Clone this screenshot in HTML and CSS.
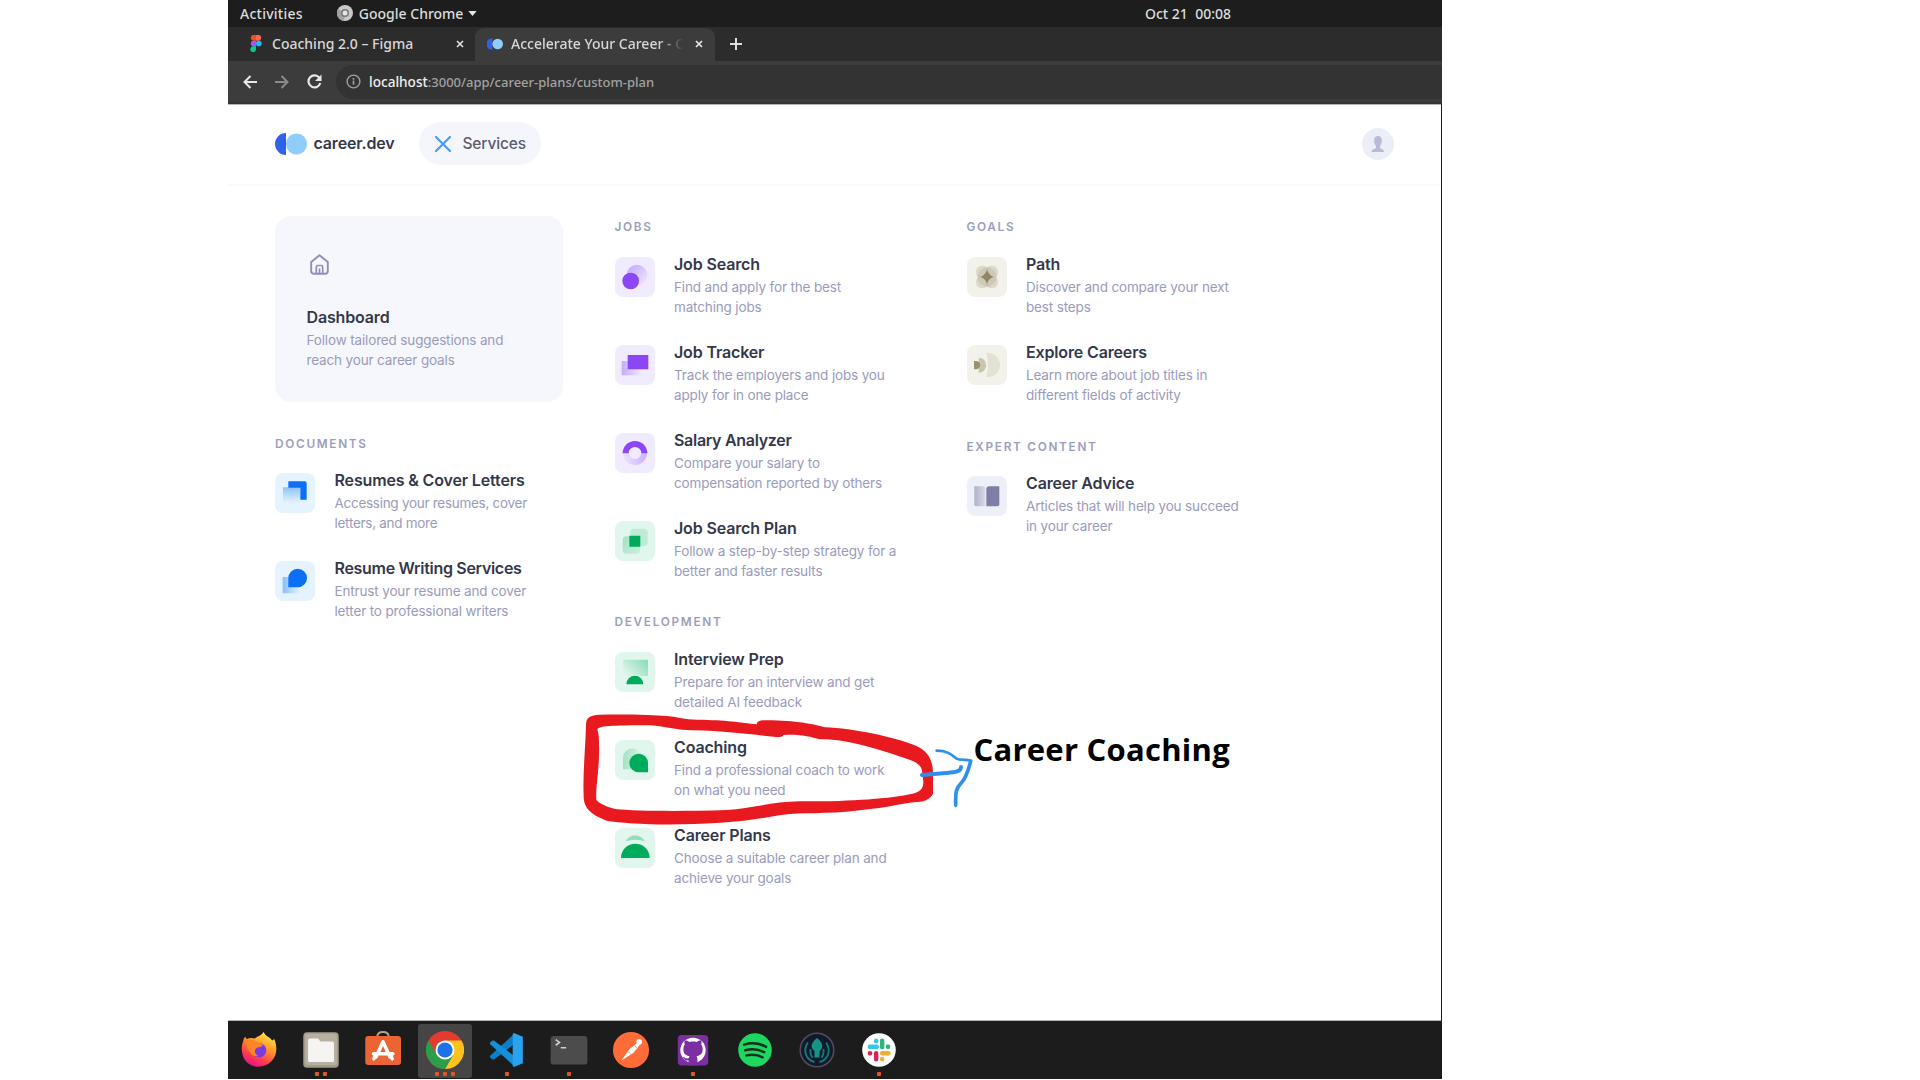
FILE: index.html
```html
<!DOCTYPE html>
<html lang="en">
<head>
<meta charset="utf-8">
<title>career.dev – Services</title>
<link rel="stylesheet" href="styles.css">
</head>
<body>
<div class="desktop">
  <div class="system-bar">
    <span class="activities">Activities</span>
    <svg class="system-icon" viewBox="0 0 16 16"><circle cx="8" cy="8" r="8" fill="#c9c9c9"/><path d="M8 8L1 4a8 8 0 0 0 6 12z" fill="#a2a2a2"/><circle cx="8" cy="8" r="4" fill="#777"/><circle cx="8" cy="8" r="2.500" fill="#e4e4e4"/></svg>
    <span class="app-name">Google Chrome</span>
    <svg class="caret" viewBox="0 0 10 6"><path d="M0 0h10L5 6z" fill="#e6e6e6"/></svg>
    <span class="clock">Oct 21&nbsp; 00:08</span>
  </div>
  <div class="tab-strip">
    <div class="tab">
      <svg class="figma" viewBox="0 0 12 18"><path d="M6 0H3.500a3 3 0 0 0 0 6H6z" fill="#f24e1e"/><path d="M6 0h2.500a3 3 0 0 1 0 6H6z" fill="#ff6250"/><path d="M6 6H3.500a3 3 0 0 0 0 6H6z" fill="#b14dff"/><circle cx="9" cy="9" r="3" fill="#1abcfe"/><path d="M6 12H3.500A3 3 0 1 0 6 15z" fill="#0acf83"/></svg>
      <span class="tab-title tab-title-figma">Coaching 2.0 – Figma</span>
      <svg class="close" viewBox="0 0 8 8"><path d="M1 1l6 6M7 1L1 7" stroke="#dedede" stroke-width="1.700"/></svg>
    </div>
    <div class="tab tab-active">
      <svg class="tab-logo" viewBox="0 0 30 22"><path d="M10 0a11 11 0 0 0 0 22z" fill="#2e62e8"/><circle cx="20" cy="11" r="10" fill="#90cdfb"/></svg>
      <span class="tab-title tab-title-career">Accelerate Your Career - C</span>
      <svg class="close" viewBox="0 0 8 8"><path d="M1 1l6 6M7 1L1 7" stroke="#e6e6e6" stroke-width="1.700"/></svg>
    </div>
    <svg class="new-tab" viewBox="0 0 12 12"><path d="M6 0v12M0 6h12" stroke="#dedede" stroke-width="2"/></svg>
  </div>
  <div class="toolbar">
    <svg class="nav" viewBox="0 0 14 14"><path d="M14 7H1.500M7.500 1l-6 6 6 6" fill="none" stroke="#e8e8e8" stroke-width="2"/></svg>
    <svg class="nav" viewBox="0 0 14 14"><path d="M0 7h12.500M6.500 1l6 6-6 6" fill="none" stroke="#8b8b8b" stroke-width="2"/></svg>
    <svg class="nav reload" viewBox="0 0 15 15"><path d="M12.500 4A6 6 0 1 0 13.300 9" fill="none" stroke="#e8e8e8" stroke-width="2.200"/><path d="M14.500 .5v6.500H8z" fill="#e8e8e8"/></svg>
    <div class="address">
      <svg class="info" viewBox="0 0 16 16"><circle cx="8" cy="8" r="6.800" fill="none" stroke="#a0a0a0" stroke-width="1.500"/><path d="M8 7v4.500M8 4.300v1.700" stroke="#a0a0a0" stroke-width="1.700"/></svg>
      <span class="url"><span class="host">localhost</span><span class="path">:3000/app/career-plans/custom-plan</span></span>
    </div>
  </div>

  <div class="page">
    <header class="header">
      <svg class="logo" viewBox="0 0 32 22"><path d="M11 0a11 11 0 0 0 0 22z" fill="#2e62e8"/><circle cx="21.500" cy="11" r="10.500" fill="#90cdfb"/></svg>
      <span class="brand">career.dev</span>
      <div class="services">
        <svg class="services-x" viewBox="0 0 16 16"><path d="M1 1l14 14M15 1L1 15" stroke="#4a9af8" stroke-width="2.200" stroke-linecap="round"/></svg>
        <span class="services-label">Services</span>
      </div>
      <svg class="avatar" viewBox="0 0 32 32"><circle cx="16" cy="16" r="16" fill="#eceef7"/><path d="M16 8c5 0 4.600 7 2 10v2c1 1 4 1 4 4H9.500c0-3 3.500-3 4.500-4v-2c-2.600-3-3-10 2-10z" fill="#b9bbd6"/></svg>
    </header>
    <main class="menu">
      <div class="column">
        <div class="dashboard">
          <svg class="home" viewBox="0 0 19 21"><path d="M1.200 8L9.500 1.200 17.800 8v9q0 2.800-2.800 2.800H4q-2.800 0-2.800-2.800z" fill="none" stroke="#8f8fb3" stroke-width="1.900" stroke-linejoin="round"/><path d="M6.300 19.500V13q0-1.500 1.500-1.500h3.400q1.500 0 1.500 1.500v6.500M9.500 14.500v5" fill="none" stroke="#8f8fb3" stroke-width="1.700"/></svg>
          <h3 class="title">Dashboard</h3>
          <p class="desc">Follow tailored suggestions and<br>reach your career goals</p>
        </div>
        <h2 class="label">DOCUMENTS</h2>
        <div class="item">
          <svg class="icon icon-blue" viewBox="0 0 120 120"><defs><linearGradient id="g1" x2="0" y2="1"><stop stop-color="#8cc4fd"/><stop offset="1" stop-color="#e5f3ff"/></linearGradient></defs><path d="M24 43h51v46H24z" fill="url(#g1)"/><path d="M40 25h50q5 0 5 5v50H76V44H40z" fill="#0d6ff5"/></svg>
          <div class="text"><h3 class="title">Resumes &amp; Cover Letters</h3><p class="desc desc-tight">Accessing your resumes, cover<br>letters, and more</p></div>
        </div>
        <div class="item">
          <svg class="icon icon-blue" viewBox="0 0 120 120"><defs><linearGradient id="g2"><stop stop-color="#86c0fc"/><stop offset="1" stop-color="#e5f3ff"/></linearGradient></defs><path d="M23 48h52v49H23z" fill="url(#g2)"/><path d="M40 79V51a28 28 0 1 1 28 28z" fill="#0d6ff5"/></svg>
          <div class="text"><h3 class="title title-tight">Resume Writing Services</h3><p class="desc">Entrust your resume and cover<br>letter to professional writers</p></div>
        </div>
      </div>

      <div class="column">
        <h2 class="label label-top">JOBS</h2>
        <div class="item">
          <svg class="icon icon-violet" viewBox="0 0 120 120"><defs><linearGradient id="g3" x2="1" y2="1"><stop stop-color="#bfa3fb"/><stop offset="1" stop-color="#f1ebff"/></linearGradient></defs><circle cx="66" cy="54" r="31" fill="url(#g3)"/><circle cx="47" cy="72" r="25" fill="#8b46f5"/></svg>
          <div class="text"><h3 class="title">Job Search</h3><p class="desc">Find and apply for the best<br>matching jobs</p></div>
        </div>
        <div class="item">
          <svg class="icon icon-violet" viewBox="0 0 120 120"><defs><linearGradient id="g4"><stop stop-color="#c3abfb"/><stop offset="1" stop-color="#f1ebff"/></linearGradient></defs><path d="M20 48h62v43H20z" fill="url(#g4)"/><path d="M38 30h62v43H38z" fill="#8b46f5"/></svg>
          <div class="text"><h3 class="title">Job Tracker</h3><p class="desc">Track the employers and jobs you<br>apply for in one place</p></div>
        </div>
        <div class="item">
          <svg class="icon icon-violet" viewBox="0 0 120 120"><defs><linearGradient id="g5"><stop stop-color="#e8deff"/><stop offset="1" stop-color="#cdb8fc"/></linearGradient></defs><path d="M33 60a27 27 0 0 0 54 0" fill="none" stroke="url(#g5)" stroke-width="18"/><path d="M32 61a28 28 0 0 1 56 0" fill="none" stroke="#8b46f5" stroke-width="18"/></svg>
          <div class="text"><h3 class="title title-tight">Salary Analyzer</h3><p class="desc">Compare your salary to<br>compensation reported by others</p></div>
        </div>
        <div class="item">
          <svg class="icon icon-green" viewBox="0 0 120 120"><defs><linearGradient id="g6" x2="1" y2="1"><stop stop-color="#a2e2c4"/><stop offset="1" stop-color="#caeedd"/></linearGradient></defs><rect x="46" y="23" width="52" height="52" rx="12" fill="#bfebd6"/><rect x="23" y="46" width="52" height="52" rx="12" fill="url(#g6)"/><path d="M43 44h33v33H43z" fill="#00ac5b"/></svg>
          <div class="text"><h3 class="title">Job Search Plan</h3><p class="desc">Follow a step-by-step strategy for a<br>better and faster results</p></div>
        </div>
        <h2 class="label label-top">DEVELOPMENT</h2>
        <div class="item">
          <svg class="icon icon-green" viewBox="0 0 120 120"><defs><linearGradient id="g7" x1="1" x2="0" y2=".6"><stop stop-color="#86dab3"/><stop offset="1" stop-color="#dcf5e9"/></linearGradient></defs><path d="M24 23h75v49H24z" fill="url(#g7)"/><path d="M31 97c0-39 57-39 57 0z" fill="#e1f6ec"/><path d="M34 97a25.500 25.500 0 0 1 51 0z" fill="#00ac5b"/></svg>
          <div class="text"><h3 class="title">Interview Prep</h3><p class="desc">Prepare for an interview and get<br>detailed AI feedback</p></div>
        </div>
        <div class="item">
          <svg class="icon icon-green" viewBox="0 0 120 120"><defs><linearGradient id="g8" x2="1"><stop stop-color="#a4e2c5"/><stop offset="1" stop-color="#d8f3e6"/></linearGradient></defs><path d="M24 88V53a28 28 0 0 1 56 0v35z" fill="url(#g8)"/><path d="M99 97H71a28 28 0 1 1 28-28z" fill="#00ac5b"/></svg>
          <div class="text"><h3 class="title">Coaching</h3><p class="desc">Find a professional coach to work<br>on what you need</p></div>
        </div>
        <div class="item">
          <svg class="icon icon-green" viewBox="0 0 120 120"><path d="M32 40a32 32 0 0 1 57 0q-28-9-57 0z" fill="#93dfbb"/><path d="M18 90a43 43 0 0 1 86 0z" fill="#00ac5b"/></svg>
          <div class="text"><h3 class="title">Career Plans</h3><p class="desc">Choose a suitable career plan and<br>achieve your goals</p></div>
        </div>
      </div>

      <div class="column">
        <h2 class="label label-top">GOALS</h2>
        <div class="item">
          <svg class="icon icon-sand" viewBox="0 0 120 120"><g fill="#b9b59a" fill-opacity=".4"><rect x="27" y="26" width="38" height="38" rx="18"/><rect x="55" y="26" width="38" height="38" rx="18"/><rect x="27" y="56" width="38" height="38" rx="18"/><rect x="55" y="56" width="38" height="38" rx="18"/><circle cx="60" cy="60" r="29"/></g><path d="M60 39q5 14 19 21-14 5-19 20-5-15-19-20 14-7 19-21z" fill="#8f8762"/></svg>
          <div class="text"><h3 class="title">Path</h3><p class="desc">Discover and compare your next<br>best steps</p></div>
        </div>
        <div class="item">
          <svg class="icon icon-sand" viewBox="0 0 120 120"><path d="M58 24h5a36 36 0 0 1 0 72h-5q10-36 0-72z" fill="#e2e1d3"/><path d="M35 38a22 22 0 0 1 0 45z" fill="#c9c6ae"/><path d="M21 48h6a12 12 0 0 1 0 25h-6z" fill="#99926f"/></svg>
          <div class="text"><h3 class="title">Explore Careers</h3><p class="desc">Learn more about job titles in<br>different fields of activity</p></div>
        </div>
        <h2 class="label">EXPERT CONTENT</h2>
        <div class="item">
          <svg class="icon icon-slate" viewBox="0 0 120 120"><defs><linearGradient id="g9"><stop stop-color="#aeb0c8"/><stop offset="1" stop-color="#d9dbe9"/></linearGradient></defs><path d="M22 31h27q6 0 6 6v54H28q-6 0-6-6z" fill="url(#g9)"/><path d="M58 40q0-9 9-9h30v54q0 6-6 6H58z" fill="#7e7fa6"/></svg>
          <div class="text"><h3 class="title">Career Advice</h3><p class="desc">Articles that will help you succeed<br>in your career</p></div>
        </div>
      </div>
    </main>
  </div>

  <div class="dock">
    <div class="app">
      <svg class="app-icon" viewBox="0 0 120 120"><defs><linearGradient id="fx" x1=".8" x2=".3" y2="1"><stop stop-color="#fff24a"/><stop offset=".4" stop-color="#ff9a2a"/><stop offset=".75" stop-color="#ff3b50"/><stop offset="1" stop-color="#e3128c"/></linearGradient></defs><path d="M75 2c3 13 20 17 27 28 5-2 5-4 5-7 13 28 9 54-7 72-20 22-60 24-80 2C4 80 2 50 10 32c1-7 4-11 6-14l6 8c9-5 17-4 25-2C53 16 67 16 75 2z" fill="url(#fx)"/><circle cx="60" cy="61" r="23" fill="#7a3bdc"/><path d="M20 32c16-10 24-2 34 2 12 5 19 8 17 13-8 5-17 2-22 10-5 9 1 20 10 23-26 2-37-22-39-48z" fill="#ff8428"/></svg>
    </div>
    <div class="app">
      <svg class="app-icon" viewBox="0 0 120 120"><rect x="4" y="4" width="112" height="112" rx="12" fill="#a39c8b"/><rect x="10" y="9" width="100" height="98" rx="8" fill="#b7b0a0"/><path d="M19 30q0-6 6-6h26l7 9h37q6 0 6 6v54q0 5-5 5H24q-5 0-5-5z" fill="#f5f4f2"/></svg>
      <div class="dots"><i></i><i></i></div>
    </div>
    <div class="app">
      <svg class="app-icon" viewBox="0 0 120 120"><path d="M42 18q0-15 18-15t18 15" fill="none" stroke="#b5a28e" stroke-width="6"/><rect x="4" y="16" width="113" height="91" rx="10" fill="#ec6433"/><path d="M38 82l22-48 22 48M30 72h61M31 88l4-9M89 88l-4-9" stroke="#fff" stroke-width="11" fill="none" stroke-linecap="round" stroke-linejoin="round"/></svg>
    </div>
    <div class="app app-current">
      <svg class="app-icon" viewBox="0 0 120 120"><circle cx="60" cy="60" r="60" fill="#e33b2e"/><path d="M60 30h52a60 60 0 0 1-52 90L86 75z" fill="#fcc31e"/><path d="M8 30a60 60 0 0 0 52 90l26-45-26 8-26-8z" fill="#2a9e48"/><circle cx="60" cy="60" r="30" fill="#fff"/><circle cx="60" cy="60" r="24" fill="#1a73e8"/></svg>
      <div class="dots"><i></i><i></i><i></i></div>
    </div>
    <div class="app">
      <svg class="app-icon" viewBox="0 0 120 120"><path d="M84 8L7 78q-2 3 0 6l6 5q4 2 7 0l64-49z" fill="#0a7fcc"/><path d="M84 112L7 42q-2-3 0-6l6-5q4-2 7 0l64 49z" fill="#148fd8"/><path d="M82 6l28 12v84l-28 12q-4-1-4-6V12q0-5 4-6z" fill="#2aa3ee"/></svg>
      <div class="dots"><i></i></div>
    </div>
    <div class="app">
      <svg class="app-icon" viewBox="0 0 120 120"><rect x="2" y="16" width="116" height="90" rx="10" fill="#4c4c4c"/><path d="M18 27l12 9-12 9M34 53h17" stroke="#d0d0d0" stroke-width="5" fill="none"/></svg>
      <div class="dots"><i></i></div>
    </div>
    <div class="app">
      <svg class="app-icon" viewBox="0 0 120 120"><circle cx="60" cy="60" r="57" fill="#ff6c37"/><path d="M29 94l27-38 15-11 9 9-12 15z" fill="#fff"/><path d="M70 45l15-11 5 6-10 14z" fill="#fff"/><circle cx="86" cy="34" r="9" fill="#fff"/><path d="M50 64l12 12M70 45l10 9" stroke="#ff9c79" stroke-width="3"/></svg>
    </div>
    <div class="app">
      <svg class="app-icon" viewBox="0 0 120 120"><rect x="12" y="13" width="96" height="96" rx="12" fill="#7b2fa3"/><circle cx="60" cy="61" r="40" fill="#fff"/><path d="M46 109V93c-12 2-14-7-20-11 8-1 11 8 20 4l3-6C32 77 28 66 30 54c0-5 2-8 4-11-2-6-1-10 0-14 6 0 11 3 15 6 7-2 15-2 22 0 4-3 9-6 15-6 1 4 2 8 0 14 2 3 4 6 4 11 2 12-2 23-19 26 3 4 3 8 3 13v16z" fill="#7b2fa3"/></svg>
      <div class="dots"><i></i></div>
    </div>
    <div class="app">
      <svg class="app-icon" viewBox="0 0 120 120"><circle cx="60" cy="60" r="53" fill="#1ed760"/><path d="M26 43c24-7 48-5 69 7M29 61c21-6 42-4 60 6M33 77c17-4 35-3 51 6" fill="none" stroke="#14311f" stroke-width="8" stroke-linecap="round"/></svg>
    </div>
    <div class="app">
      <svg class="app-icon" viewBox="0 0 120 120"><circle cx="60" cy="60" r="53" fill="#11192c" stroke="#514b5a" stroke-width="5"/><path d="M60 22c-13 10-21 24-15 33l7 9v20h16V64l7-9c6-9-2-23-15-33z" fill="#179287"/><path d="M31 36c-18 28-3 56 21 62M89 36c18 28 3 56-21 62M40 57c-3 13 0 20 6 27M80 57c3 13 0 20-6 27" fill="none" stroke="#137b76" stroke-width="6"/></svg>
    </div>
    <div class="app">
      <svg class="app-icon" viewBox="0 0 120 120"><circle cx="60" cy="60" r="53" fill="#fff"/><g stroke-width="14" stroke-linecap="round"><path d="M31 50h22M51 31v1" stroke="#36c5f0"/><path d="M70 31v20M88 50h1" stroke="#2eb67d"/><path d="M70 70h20M70 88v1" stroke="#ecb22e"/><path d="M51 70v19M31 70h1" stroke="#e01e5a"/></g></svg>
      <div class="dots"><i></i></div>
    </div>
  </div>
</div>

<svg class="markup" viewBox="0 0 1260 900">
  <path fill="#e8191f" fill-rule="evenodd" d="M48 375C48 352 60 345 90 344C160 342 250 344 290 348C330 352 340 358 380 359C470 360 510 367 560 373C562 362 572 361 590 361C680 362 730 372 765 382C850 385 970 410 1040 438C1075 455 1087 480 1089 515V582C1080 597 1065 604 1050 605C1000 607 960 622 900 627C800 642 720 638 660 642C600 648 540 665 450 668C300 678 170 672 110 662C60 645 40 620 41 590C38 520 46 450 48 375ZM82 388C88 378 120 376 240 376C290 380 330 392 370 391C480 394 560 405 628 412C636 410 640 408 640 405C690 402 720 410 750 418C830 418 900 440 1010 476C1040 485 1054 497 1056 512L1060 545C1060 567 1050 575 1028 581C960 596 830 605 690 604C600 606 540 626 470 630C350 634 200 634 135 627C110 620 90 612 79 600C76 560 90 500 87 430C87 405 85 400 82 388Z"/>
  <g fill="none" stroke="#2d90ed" stroke-linecap="round" stroke-linejoin="round"><path stroke-width="12" d="M1056 525C1090 521 1120 521 1150 517C1166 513 1173 511 1173 501"/><path stroke-width="8" d="M1100 452C1130 452 1143 462 1158 475C1172 482 1188 478 1203 482"/><path stroke-width="11" d="M1202 484C1196 505 1190 530 1176 546C1155 567 1157 580 1157 616"/></g>
</svg>
<p class="callout">Career Coaching</p>
</body>
</html>
```
FILE: styles.css
```css
* { box-sizing: border-box; }
body { margin: 0; background: #fff; font-family: Inter, sans-serif; height: 1080px; overflow: hidden; }
h2, h3, p { margin: 0; }
svg { display: block; flex: none; }
.desktop { width: 1214px; height: 1079px; margin-left: 228px; display: flex; flex-direction: column; background: #1c1c1c; }

.system-bar { height: 27px; flex: none; display: flex; align-items: center; background: #1d1d1d; color: #dcdcdc; font: 500 14px/25px "Noto Sans", sans-serif; padding: 0 211px 1px 12px; white-space: nowrap; }
.activities { letter-spacing: .25px; }
.system-icon { width: 16px; height: 16px; margin-left: 34px; margin-right: 6px; }
.caret { width: 9px; height: 5px; margin-left: 5px; }
.clock { margin-left: auto; }

.tab-strip { height: 34px; flex: none; display: flex; align-items: flex-end; background: #2c2c2c; }
.tab { height: 33px; width: 247px; display: flex; align-items: center; padding: 0 11px 2px 22px; color: #d8d8d8; font: 500 14px/31px "Noto Sans", sans-serif; white-space: nowrap; }
.tab-active { width: 240px; background: #3c3c3c; border-radius: 9px 9px 0 0; padding: 0 12px 2px 12px; }
.figma { width: 12px; height: 17px; margin-right: 10px; }
.tab-logo { width: 16px; height: 12px; margin-right: 8px; }
.tab-title-career { width: 172px; overflow: hidden; -webkit-mask-image: linear-gradient(90deg, #000 86%, transparent 100%); mask-image: linear-gradient(90deg, #000 86%, transparent 100%); }
.close { width: 8px; height: 8px; margin-left: auto; }
.new-tab { width: 12px; height: 12px; margin: 0 0 11px 15px; }

.toolbar { height: 43px; flex: none; display: flex; align-items: center; background: #3c3c3c; border-bottom: 2px solid #333; padding-left: 15px; }
.nav { width: 14px; height: 14px; margin-right: 18px; }
.reload { width: 15px; height: 15px; margin-right: 14px; }
.address { height: 34px; flex: 1; display: flex; align-items: center; background: #333; border-radius: 17px 0 0 17px; padding-left: 10px; font: 500 13px/34px "Noto Sans", sans-serif; white-space: nowrap; }
.info { width: 15px; height: 15px; margin-right: 8px; }
.host { color: #f0f0f0; font-size: 13.600px; }
.path { color: #a2a2a2; }

.page { height: 917px; flex: none; width: 1213px; background: #fff; border-top: 1px solid #b5b5b5; border-bottom: 1px solid #b5b5b5; }
.header { height: 81px; display: flex; align-items: center; padding: 0 47px 2px 46.500px; border-bottom: 2px solid #fafafd; }
.logo { width: 32px; height: 22px; }
.brand { width: 82px; margin-left: 7px; margin-top: -1px; font-size: 16px; font-weight: 600; letter-spacing: -.15px; color: #34384a; }
.services { margin-left: 23.500px; width: 122px; height: 43px; border-radius: 22px; background: #f5f6fc; display: flex; align-items: center; padding-left: 16px; }
.services-x { width: 16px; height: 16px; margin-right: 11.500px; }
.services-label { font-size: 15.500px; font-weight: 500; letter-spacing: -.15px; color: #5a5c70; }
.avatar { width: 32px; height: 32px; margin-left: auto; }

.menu { display: grid; grid-template-columns: 339.500px 352px 300px; padding: 28px 0 0 47px; }
.dashboard { width: 288px; height: 186px; margin: 2px 0 28px; padding: 38px 0 0 31.500px; background: #f6f7fc; border-radius: 16px; }
.home { width: 19px; height: 21px; margin: 0 0 32px 3px; }
.label { height: 43px; padding-top: 6px; font-size: 11.800px; line-height: 16px; font-weight: 600; letter-spacing: 1.700px; color: #9c9dbd; }
.label-top { padding-top: 5px; }
.item { height: 88px; display: flex; gap: 19.500px; }
.icon { width: 40px; height: 40px; border-radius: 8px; }
.icon-blue { background: #e5f3ff; }
.icon-violet { background: #f1ebff; }
.icon-green { background: #e1f6ec; }
.icon-sand { background: #f3f2ea; }
.icon-slate { background: #eef0f9; }
.text { margin-top: -3px; }
.title { font-size: 16px; line-height: 20px; font-weight: 600; letter-spacing: -.15px; color: #34384a; white-space: nowrap; }
.title-tight { letter-spacing: -.3px; }
.desc { margin-top: 3px; font-size: 13.500px; line-height: 20px; letter-spacing: -.15px; color: #9a9bbb; white-space: nowrap; }
.desc-tight { letter-spacing: -.28px; }

.dock { flex: 1; display: flex; background: #1c1c1c; }
.app { width: 54px; height: 54px; margin: 3px 4px 0; position: relative; padding-top: 7px; }
.app-current { background: #454545; border-radius: 3px; }
.app-icon { width: 38px; height: 38px; margin: 0 auto; }
.dots { display: flex; justify-content: center; gap: 4px; margin-top: 3px; }
.dots i { width: 4px; height: 4px; border-radius: 1px; background: #e95420; }

.markup { position: absolute; left: 570px; top: 600px; width: 420px; height: 300px; }
.callout { position: absolute; left: 973.500px; top: 727px; font: 700 31px/44px "Open Sans", sans-serif; letter-spacing: .25px; color: #000; white-space: nowrap; }
```
